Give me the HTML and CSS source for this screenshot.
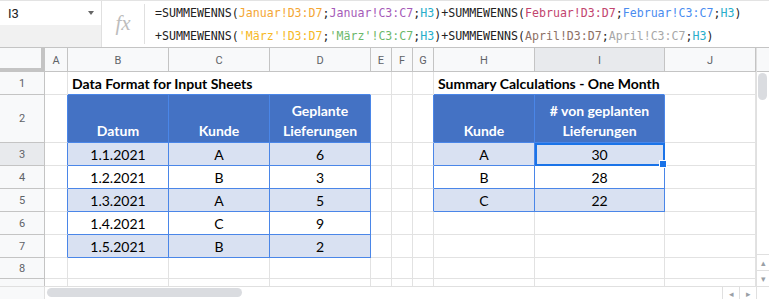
FILE: index.html
```html
<!DOCTYPE html>
<html lang="de">
<head>
    <meta charset="UTF-8">
    <title>SUMMEWENNS über mehrere Blätter</title>
    <link rel="stylesheet" href="styles.css">
</head>
<body>
    <div class="formula-bar">
        <div class="name-box">
            <div class="name-top"><span>I3</span><span class="caret"></span></div>
        </div>
        <div class="fx">fx</div>
        <div class="formula">
            <div>=SUMMEWENNS(<span class="c1">Januar!D3:D7</span>;<span class="c2">Januar!C3:C7</span>;<span class="c3">H3</span>)+SUMMEWENNS(<span class="c4">Februar!D3:D7</span>;<span class="c5">Februar!C3:C7</span>;<span class="c3">H3</span>)</div>
            <div>+SUMMEWENNS(<span class="c6">'März'!D3:D7</span>;<span class="c7">'März'!C3:C7</span>;<span class="c3">H3</span>)+SUMMEWENNS(<span class="c8">April!D3:D7</span>;<span class="c9">April!C3:C7</span>;<span class="c3">H3</span>)</div>
        </div>
    </div>

    <div class="sheet">
        <div class="grid">
            <!-- column headers -->
            <div class="corner"></div>
            <div class="colhead">A</div>
            <div class="colhead">B</div>
            <div class="colhead">C</div>
            <div class="colhead">D</div>
            <div class="colhead">E</div>
            <div class="colhead">F</div>
            <div class="colhead">G</div>
            <div class="colhead">H</div>
            <div class="colhead active">I</div>
            <div class="colhead">J</div>

            <!-- row 1 -->
            <div class="rowhead">1</div>
            <div class="cell"></div>
            <div class="cell title span3">Data Format for Input Sheets</div>
            <div class="cell"></div>
            <div class="cell"></div>
            <div class="cell"></div>
            <div class="cell title span2">Summary Calculations - One Month</div>
            <div class="cell"></div>

            <!-- row 2 -->
            <div class="rowhead">2</div>
            <div class="cell edge"></div>
            <div class="cell th">Datum</div>
            <div class="cell th">Kunde</div>
            <div class="cell th">Geplante<br>Lieferungen</div>
            <div class="cell"></div>
            <div class="cell"></div>
            <div class="cell edge"></div>
            <div class="cell th">Kunde</div>
            <div class="cell th"># von geplanten<br>Lieferungen</div>
            <div class="cell"></div>

            <!-- row 3 -->
            <div class="rowhead active">3</div>
            <div class="cell edge"></div>
            <div class="cell td alt">1.1.2021</div>
            <div class="cell td alt">A</div>
            <div class="cell td alt">6</div>
            <div class="cell"></div>
            <div class="cell"></div>
            <div class="cell edge"></div>
            <div class="cell td alt">A</div>
            <div class="cell td alt sel">30<span class="handle"></span></div>
            <div class="cell"></div>

            <!-- row 4 -->
            <div class="rowhead">4</div>
            <div class="cell edge"></div>
            <div class="cell td">1.2.2021</div>
            <div class="cell td">B</div>
            <div class="cell td">3</div>
            <div class="cell"></div>
            <div class="cell"></div>
            <div class="cell edge"></div>
            <div class="cell td">B</div>
            <div class="cell td">28</div>
            <div class="cell"></div>

            <!-- row 5 -->
            <div class="rowhead">5</div>
            <div class="cell edge"></div>
            <div class="cell td alt">1.3.2021</div>
            <div class="cell td alt">A</div>
            <div class="cell td alt">5</div>
            <div class="cell"></div>
            <div class="cell"></div>
            <div class="cell edge"></div>
            <div class="cell td alt">C</div>
            <div class="cell td alt">22</div>
            <div class="cell"></div>

            <!-- row 6 -->
            <div class="rowhead">6</div>
            <div class="cell edge"></div>
            <div class="cell td">1.4.2021</div>
            <div class="cell td">C</div>
            <div class="cell td">9</div>
            <div class="cell"></div>
            <div class="cell"></div>
            <div class="cell"></div>
            <div class="cell"></div>
            <div class="cell"></div>
            <div class="cell"></div>

            <!-- row 7 -->
            <div class="rowhead">7</div>
            <div class="cell edge"></div>
            <div class="cell td alt">1.5.2021</div>
            <div class="cell td alt">B</div>
            <div class="cell td alt">2</div>
            <div class="cell"></div>
            <div class="cell"></div>
            <div class="cell"></div>
            <div class="cell"></div>
            <div class="cell"></div>
            <div class="cell"></div>

            <!-- row 8 -->
            <div class="rowhead">8</div>
            <div class="cell"></div>
            <div class="cell"></div>
            <div class="cell"></div>
            <div class="cell"></div>
            <div class="cell"></div>
            <div class="cell"></div>
            <div class="cell"></div>
            <div class="cell"></div>
            <div class="cell"></div>
            <div class="cell"></div>

            <!-- row 9 (cut off) -->
            <div class="rowhead">9</div>
            <div class="cell"></div>
            <div class="cell"></div>
            <div class="cell"></div>
            <div class="cell"></div>
            <div class="cell"></div>
            <div class="cell"></div>
            <div class="cell"></div>
            <div class="cell"></div>
            <div class="cell"></div>
            <div class="cell"></div>
        </div>

        <div class="vscroll">
            <div class="vhead"></div>
            <div class="vtrack"><div class="vthumb"></div></div>
            <div class="arrow">&#9652;</div>
            <div class="arrow">&#9662;</div>
        </div>
    </div>

    <div class="hscroll">
        <div class="hblank"></div>
        <div class="htrack"><div class="hthumb"></div></div>
        <div class="harrow">&#9666;</div>
        <div class="harrow">&#9656;</div>
        <div class="hcorner"></div>
    </div>
</body>
</html>
```

FILE: styles.css
```css
body {
    margin: 0;
    overflow: hidden;
    width: 769px;
    height: 299px;
    background-color: #fff;
    font-family: Lato, "Open Sans", sans-serif;
}

/* formula bar */
.formula-bar {
    display: flex;
    height: 47px;
    border-top: 1px solid #e3e3e3;
    border-bottom: 1px solid #c4c4c4;
    box-sizing: border-box;
    height: 48px;
}
.name-box {
    width: 101px;
    background-color: #f1f1f1;
    border-right: 1px solid #e0e0e0;
}
.name-top {
    height: 24px;
    background-color: #fff;
    display: flex;
    align-items: center;
    justify-content: space-between;
    padding: 0 7px 0 8px;
    font-family: Roboto, sans-serif;
    font-size: 13px;
    color: #222;
}
.caret {
    width: 0;
    height: 0;
    border-left: 3.5px solid transparent;
    border-right: 3.5px solid transparent;
    border-top: 4px solid #666;
}
.fx {
    width: 42px;
    display: flex;
    align-items: center;
    justify-content: center;
    font-family: "Liberation Serif", serif;
    font-style: italic;
    font-size: 21px;
    color: #bdbdbd;
    border-right: 1px solid #e0e0e0;
    margin: 3px 0;
    padding-bottom: 2px;
}
.formula {
    padding: 1px 0 0 10px;
    font-family: "DejaVu Sans Mono", monospace;
    font-size: 11.6px;
    line-height: 23px;
    color: #222;
    white-space: nowrap;
}
.c1 { color: #f4a634; }
.c2 { color: #a55ab8; }
.c3 { color: #27aecb; }
.c4 { color: #c2456e; }
.c5 { color: #4a8cf0; }
.c6 { color: #f6b825; }
.c7 { color: #6cb86a; }
.c8 { color: #8d7065; }
.c9 { color: #a7a7a7; }

/* sheet */
.sheet {
    display: flex;
    height: 238px;
    overflow: hidden;
}
.grid {
    display: grid;
    grid-template-columns: 45px 23px 101px 101px 101px 21px 21px 21px 101px 130px 91px;
    grid-template-rows: 24px 23px 48px 23px 23px 23px 23px 23px 21px 23px;
    width: 756px;
}
.grid > div {
    box-sizing: border-box;
}
.corner {
    background-color: #f8f9fa;
    border-right: 4px solid #c4c4c4;
    border-bottom: 4px solid #c4c4c4;
}
.colhead, .rowhead {
    background-color: #f8f9fa;
    color: #5f6368;
    font-family: Roboto, sans-serif;
    font-size: 11px;
    display: flex;
    align-items: center;
    justify-content: center;
    border-right: 1px solid #c4c4c4;
    border-bottom: 1px solid #c4c4c4;
}
.colhead {
    padding-top: 1px;
}
.rowhead {
    border-right: 1px solid #c4c4c4;
}
.colhead.active, .rowhead.active {
    background-color: #e8eaed;
}
.cell {
    border-right: 1px solid #e2e2e2;
    border-bottom: 1px solid #e2e2e2;
    font-size: 14px;
    color: #000;
    display: flex;
    align-items: center;
    justify-content: center;
    position: relative;
}
.title {
    justify-content: flex-start;
    padding-left: 4px;
    font-weight: bold;
    border-right-color: #fff;
    border-bottom: 1px solid #4a86e8;
}
.span3 { grid-column: span 3; }
.span2 { grid-column: span 2; }
.edge {
    border-right: 1px solid #4a86e8;
}
.th {
    background-color: #4472c4;
    color: #fff;
    font-weight: bold;
    align-items: flex-end;
    text-align: center;
    line-height: 20px;
    padding-bottom: 1px;
    border-right: 1px solid #4a86e8;
    border-bottom: 1px solid #4a86e8;
}
.td {
    border-right: 1px solid #4a86e8;
    border-bottom: 1px solid #4a86e8;
    padding-top: 1px;
}
.alt {
    background-color: #d9e1f2;
}
.sel {
    outline: 2px solid #1a73e8;
    outline-offset: -2px;
}
.handle {
    position: absolute;
    right: -3px;
    bottom: -3px;
    width: 6px;
    height: 6px;
    background-color: #1a73e8;
    border: 1px solid #fff;
    z-index: 2;
}

/* scrollbars */
.vscroll {
    width: 13px;
    display: flex;
    flex-direction: column;
    border-left: 1px solid #e0e0e0;
    box-sizing: border-box;
    background-color: #fff;
}
.vhead {
    height: 24px;
    background-color: #f8f9fa;
    border-bottom: 1px solid #c4c4c4;
    box-sizing: border-box;
}
.vtrack {
    flex: 1;
    padding-top: 1px;
}
.vthumb {
    width: 9px;
    height: 27px;
    margin-left: 1px;
    border-radius: 5px;
    background-color: #dadce0;
}
.arrow {
    height: 15px;
    border-top: 1px solid #e0e0e0;
    color: #9aa0a6;
    font-size: 9px;
    display: flex;
    align-items: center;
    justify-content: center;
}
.hscroll {
    display: flex;
    height: 13px;
    border-top: 1px solid #e0e0e0;
    box-sizing: border-box;
}
.hblank {
    width: 45px;
    background-color: #f8f9fa;
    border-right: 1px solid #e0e0e0;
    box-sizing: border-box;
}
.htrack {
    flex: 1;
    padding: 1px 0 0 2px;
}
.hthumb {
    width: 195px;
    height: 9px;
    border-radius: 5px;
    background-color: #dadce0;
}
.harrow {
    width: 16px;
    border-left: 1px solid #e0e0e0;
    color: #9aa0a6;
    font-size: 9px;
    display: flex;
    align-items: center;
    justify-content: center;
}
.hcorner {
    width: 12px;
    border-left: 1px solid #e0e0e0;
}
```
